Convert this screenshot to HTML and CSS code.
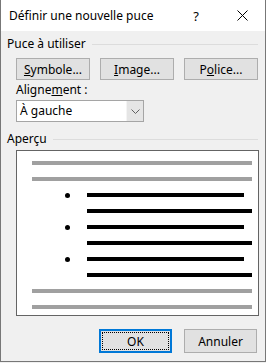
FILE: index.html
```html
<!DOCTYPE html>
<html lang="fr">
<head>
<meta charset="UTF-8">
<title>Définir une nouvelle puce</title>
<link rel="stylesheet" href="styles.css">
</head>
<body>

<div class="dialog">
    <div class="titlebar">
        <span class="title">Définir une nouvelle puce</span>
        <span class="tb-btn">?</span>
        <span class="tb-btn">
            <svg width="11" height="11" viewBox="0 0 11 11"><path d="M0.5 0.5L10.5 10.5M10.5 0.5L0.5 10.5" stroke="#000" stroke-width="1" fill="none"/></svg>
        </span>
    </div>

    <div class="content">
        <div class="group-head"><span>Puce à utiliser</span><span class="rule"></span></div>
        <div class="btn-row">
            <button class="btn"><u>S</u>ymbole...</button>
            <button class="btn"><u>I</u>mage...</button>
            <button class="btn">P<u>o</u>lice...</button>
        </div>

        <div class="field-label">Aligne<u>m</u>ent :</div>
        <div class="combo">
            <span class="combo-text">À gauche</span>
            <span class="combo-arrow">
                <svg width="9" height="5" viewBox="0 0 9 5"><path d="M0.5 0.5L4.5 4.5L8.5 0.5" stroke="#606060" stroke-width="1" fill="none"/></svg>
            </span>
        </div>

        <div class="group-head second"><span>Aperçu</span><span class="rule"></span></div>
        <div class="preview">
            <div class="line gray"></div>
            <div class="line gray"></div>
            <div class="item">
                <div class="mark"><span class="dot"></span></div>
                <div class="lines">
                    <div class="line black short"></div>
                    <div class="line black"></div>
                </div>
            </div>
            <div class="item">
                <div class="mark"><span class="dot"></span></div>
                <div class="lines">
                    <div class="line black short"></div>
                    <div class="line black"></div>
                </div>
            </div>
            <div class="item">
                <div class="mark"><span class="dot"></span></div>
                <div class="lines">
                    <div class="line black short"></div>
                    <div class="line black"></div>
                </div>
            </div>
            <div class="line gray"></div>
            <div class="line gray"></div>
        </div>

        <div class="footer">
            <button class="btn default">OK</button>
            <button class="btn">Annuler</button>
        </div>
    </div>
</div>

</body>
</html>
```

FILE: styles.css
```css
body {
    margin: 0;
    font-family: "Noto Sans", "Open Sans", sans-serif;
    font-size: 12px;
    color: #000;
    background: #f0f0f0;
}

.dialog {
    width: 266px;
    height: 362px;
    box-sizing: border-box;
    border: 1px solid #777;
    border-top: none;
    background-color: #f0f0f0;
}

.titlebar {
    height: 31px;
    display: flex;
    align-items: center;
    background-color: #fff;
}

.title {
    flex: 1;
    padding-left: 8px;
    padding-bottom: 1px;
}

.tb-btn {
    width: 46px;
    height: 31px;
    display: flex;
    align-items: center;
    justify-content: center;
    font-size: 13px;
}

.content {
    padding: 0 7px 0 6px;
}

.group-head {
    display: flex;
    align-items: center;
    height: 14px;
    margin-top: 6px;
    line-height: 14px;
}

.group-head.second {
    margin-top: 10px;
}

.group-head .rule {
    flex: 1;
    height: 1px;
    margin-left: 6px;
    margin-top: 1px;
    background-color: #dcdcdc;
}

.btn-row {
    display: flex;
    gap: 10px;
    margin-top: 7px;
    padding-left: 9px;
}

.btn {
    width: 74px;
    height: 22px;
    padding: 0;
    font-family: inherit;
    font-size: 12px;
    color: #000;
    background-color: #e1e1e1;
    border: 1px solid #adadad;
    box-sizing: border-box;
}

.field-label {
    margin-top: 3px;
    padding-left: 9px;
    height: 14px;
    line-height: 14px;
}

.combo {
    display: flex;
    width: 128px;
    height: 22px;
    margin-top: 3px;
    margin-left: 9px;
    box-sizing: border-box;
    border: 1px solid #a5a5a5;
    background-color: #fff;
}

.combo-text {
    flex: 1;
    padding-left: 3px;
    line-height: 19px;
}

.combo-arrow {
    width: 16px;
    display: flex;
    align-items: center;
    justify-content: center;
    background-color: #e5e5e5;
    border-left: 1px solid #f4f4f4;
}

.preview {
    width: 243px;
    height: 166px;
    margin-top: 4px;
    margin-left: 9px;
    box-sizing: border-box;
    border: 1px solid #646464;
    background-color: #fff;
    padding: 10px 6px 0 15px;
    display: flex;
    flex-direction: column;
    gap: 12px;
}

.line {
    height: 4px;
}

.line.gray {
    background-color: #a0a0a0;
}

.line.black {
    background-color: #000;
}

.line.short {
    margin-right: 8px;
}

.item {
    display: flex;
}

.mark {
    width: 55px;
    padding-left: 33px;
    box-sizing: border-box;
}

.dot {
    display: block;
    width: 5px;
    height: 5px;
    border-radius: 50%;
    background-color: #000;
    margin-top: -0.5px;
}

.lines {
    flex: 1;
    display: flex;
    flex-direction: column;
    gap: 12px;
}

.footer {
    display: flex;
    justify-content: flex-end;
    gap: 12px;
    margin-top: 13px;
    padding-right: 1px;
}

.footer .btn {
    width: 73px;
    height: 24px;
}

.btn.default {
    border: 2px solid #0078d7;
    outline: 1px dotted #000;
    outline-offset: -4px;
}
```
